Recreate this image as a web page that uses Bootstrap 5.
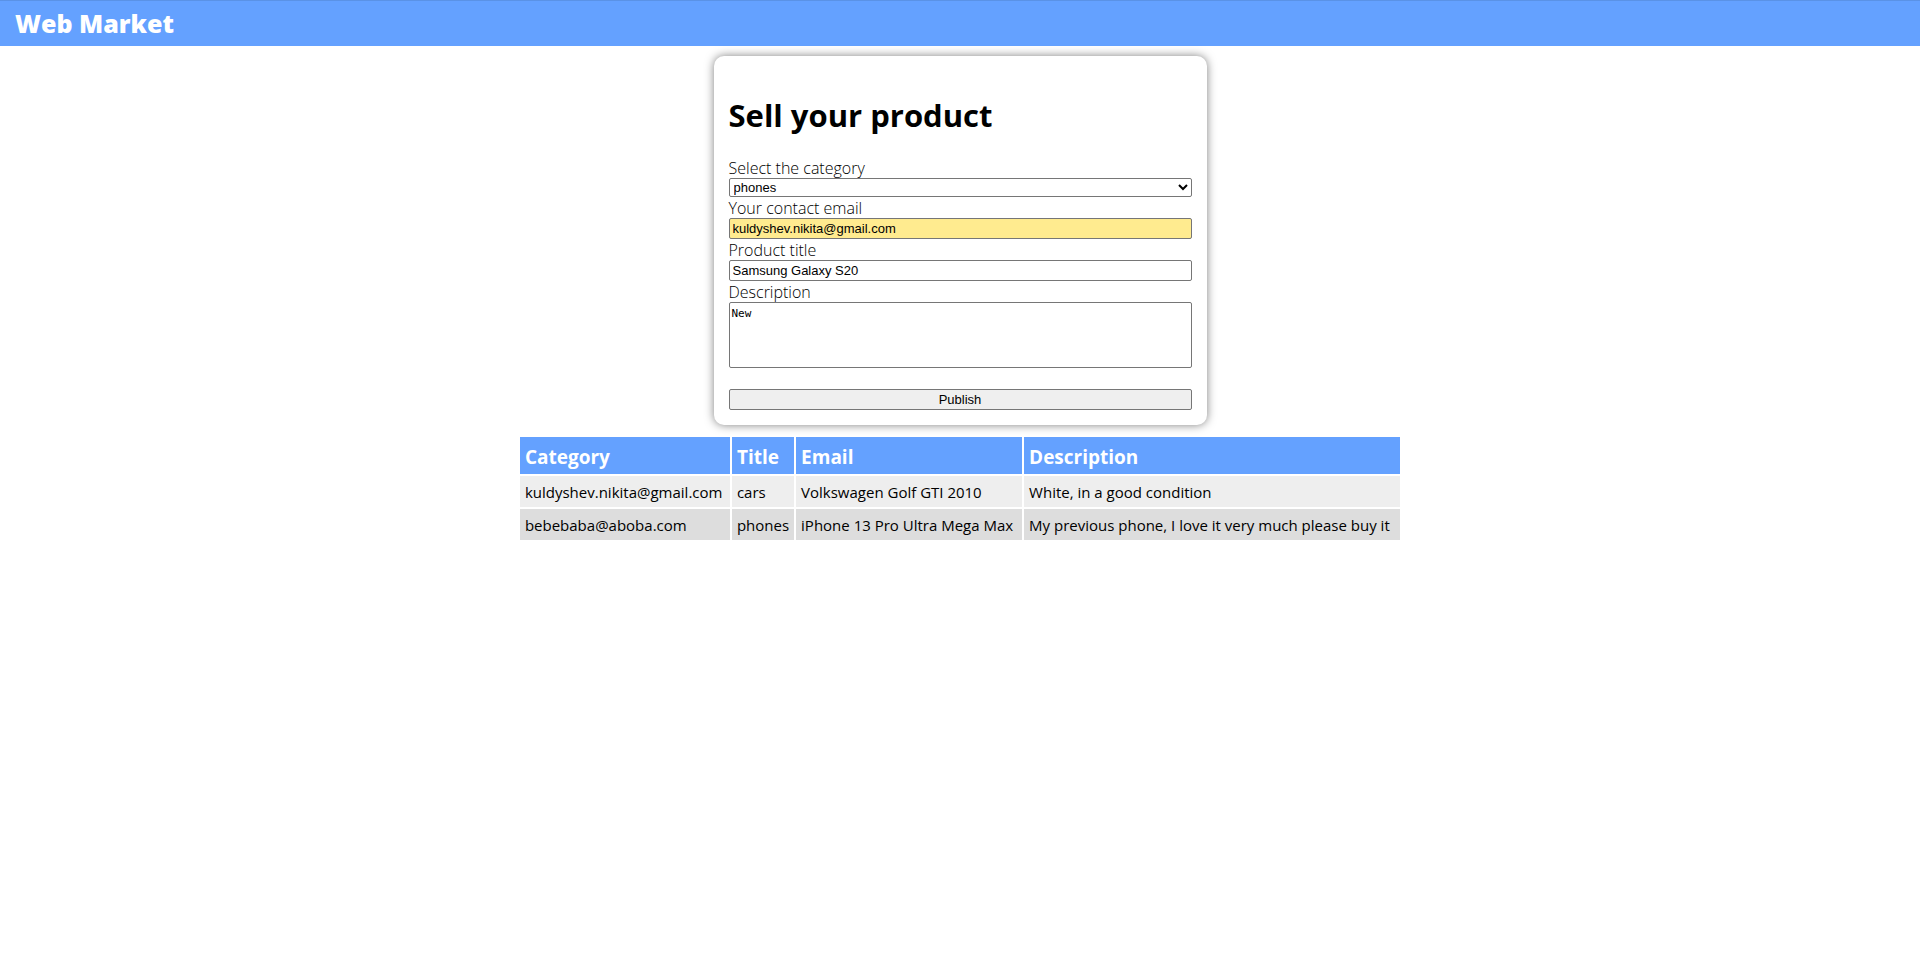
<!DOCTYPE html>
<html lang="en">
<head>
<meta charset="utf-8">
<meta name="viewport" content="width=device-width, initial-scale=1">
<title>Web Market</title>
<link href="https://cdn.jsdelivr.net/npm/bootstrap@5.3.0/dist/css/bootstrap.min.css" rel="stylesheet">
<style>
  body { font-family: "Segoe UI", "Open Sans", sans-serif; font-size: 15px; line-height: 21px; color: #000; }
  .market-bar { background: #64a1ff; border-top: 1px solid #5a92e6; padding: 4px 15px 5px; }
  .market-brand { color: #fff; font-size: 25px; line-height: 36px; font-weight: 800; }
  .sell-card { width: 493px; max-width: 100%; margin: 10px 0; padding: 15px; border: 0; border-radius: 10px; box-shadow: 0 0 10px rgba(0, 0, 0, .5); }
  .sell-title { font-size: 31px; line-height: 43px; font-weight: 700; margin: 23px 0 20px; }
  .sell-label { font-size: 16px; font-weight: 300; height: 21px; line-height: 23px; }
  .field { width: 100%; height: 21px; padding: 1px 3px; border: 1px solid #767676; border-radius: 2px; background: #fff; color: #000; font-family: Arial, "Liberation Sans", sans-serif; font-size: 13px; line-height: 17px; }
  select.field { height: 19px; padding: 0; }
  .field-filled { background: #ffeb8f; }
  textarea.field { height: 66px; resize: none; padding: 2px; font-family: Consolas, "DejaVu Sans Mono", monospace; font-size: 11px; }
  button.field { background: #efefef; margin-top: 21px; padding: 0; }
  .offers { border-collapse: separate; border-spacing: 2px; }
  .offers th, .offers td { padding: 6px 5px 4px; white-space: nowrap; }
  .offers th { background: #64a1ff; color: #fff; padding: 7px 5px 3px; font-size: 19px; line-height: 27px; font-weight: 700; }
  .offers td { background: #eee; line-height: 21px; }
  .offers tbody tr:nth-child(even) td { background: #ddd; }
  .col-category { width: 210px; }
  .col-title { width: 62px; }
  .col-email { width: 226px; }
  .col-description { width: 376px; }
</style>
</head>
<body>
<header class="market-bar d-flex">
  <a class="market-brand text-decoration-none" href="#">Web Market</a>
</header>
<main class="d-flex flex-column align-items-center">
  <form class="sell-card card" id="sell">
    <h1 class="sell-title">Sell your product</h1>
    <label class="sell-label" for="category">Select the category</label>
    <select class="field" id="category"><option>phones</option><option>cars</option></select>
    <label class="sell-label" for="email">Your contact email</label>
    <input class="field field-filled" id="email" type="email" value="kuldyshev.nikita@gmail.com">
    <label class="sell-label" for="title">Product title</label>
    <input class="field" id="title" type="text" value="Samsung Galaxy S20">
    <label class="sell-label" for="description">Description</label>
    <textarea class="field" id="description">New</textarea>
    <button class="field" type="button">Publish</button>
  </form>
  <table class="offers">
    <thead>
      <tr><th class="col-category">Category</th><th class="col-title">Title</th><th class="col-email">Email</th><th class="col-description">Description</th></tr>
    </thead>
    <tbody>
      <tr><td>kuldyshev.nikita@gmail.com</td><td>cars</td><td>Volkswagen Golf GTI 2010</td><td>White, in a good condition</td></tr>
      <tr><td>bebebaba@aboba.com</td><td>phones</td><td>iPhone 13 Pro Ultra Mega Max</td><td>My previous phone, I love it very much please buy it</td></tr>
    </tbody>
  </table>
</main>
<script src="https://cdn.jsdelivr.net/npm/bootstrap@5.3.0/dist/js/bootstrap.bundle.min.js"></script>
</body>
</html>
